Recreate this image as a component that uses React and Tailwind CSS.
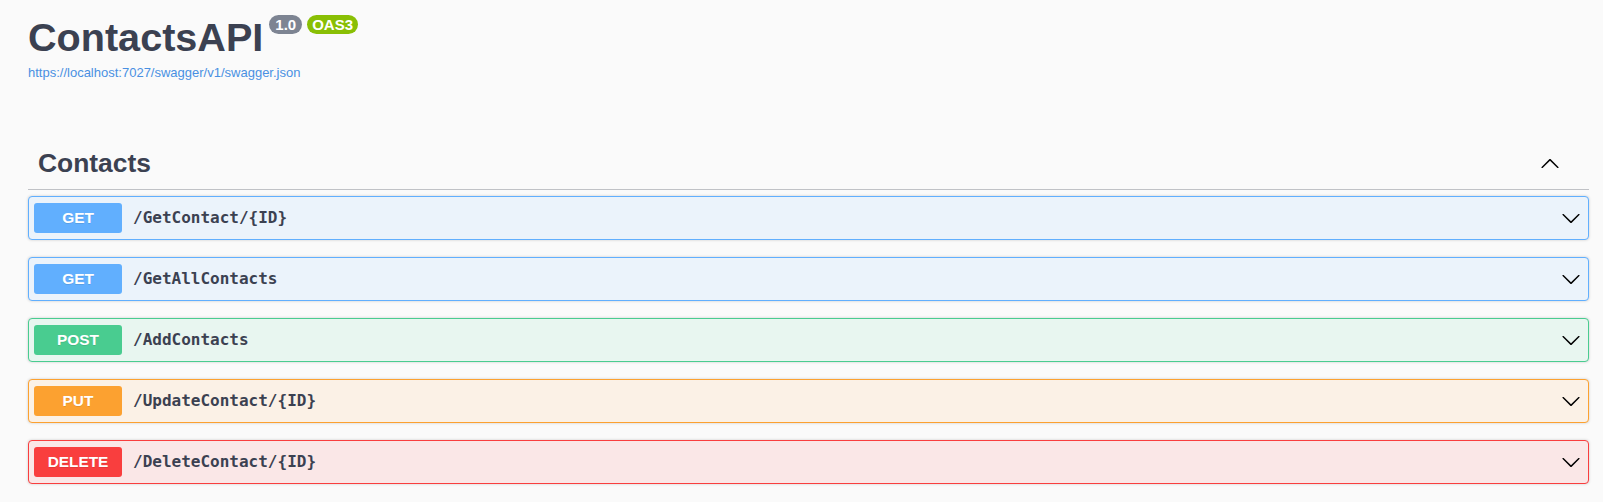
const ops = [
  { method: "GET", path: "/GetContact/{ID}", badge: "bg-[#61affe]", box: "bg-[#ebf3fb] border-[#61affe]" },
  { method: "GET", path: "/GetAllContacts", badge: "bg-[#61affe]", box: "bg-[#ebf3fb] border-[#61affe]" },
  { method: "POST", path: "/AddContacts", badge: "bg-[#49cc90]", box: "bg-[#e8f6f0] border-[#49cc90]" },
  { method: "PUT", path: "/UpdateContact/{ID}", badge: "bg-[#fca130]", box: "bg-[#fbf1e6] border-[#fca130]" },
  { method: "DELETE", path: "/DeleteContact/{ID}", badge: "bg-[#f93e3e]", box: "bg-[#fae7e7] border-[#f93e3e]" },
];

const Arrow = ({ up = false, size = 20 }) => (
  <svg
    width={size}
    height={size}
    viewBox="0 0 20 20"
    className={up ? "rotate-180" : ""}
  >
    <path
      fill="#000"
      d="M17.418 6.109c.272-.268.709-.268.979 0s.271.701 0 .969l-7.908 7.83c-.27.268-.707.268-.979 0l-7.908-7.83c-.27-.268-.27-.701 0-.969.271-.268.709-.268.979 0L10 13.25l7.418-7.141z"
    />
  </svg>
);

const Operation = ({ op }) => (
  <div
    className={`flex items-center h-[44px] mb-[17px] border rounded-[4px] shadow-[0_0_3px_rgba(0,0,0,0.19)] pl-[5px] pr-[6px] ${op.box}`}
  >
    <span
      className={`w-[88px] h-[30px] flex items-center justify-center rounded-[3px] text-white font-bold text-[15.4px] [text-shadow:0_1px_0_rgba(0,0,0,0.1)] ${op.badge}`}
    >
      {op.method}
    </span>
    <span className="ml-[11px] flex-1 font-['DejaVu_Sans_Mono',monospace] font-bold text-[16px] text-[#3b4151]">
      {op.path}
    </span>
    <span className="flex items-center mr-[1px]">
      <Arrow />
    </span>
  </div>
);

export default function App() {
  return (
    <div className="min-h-screen bg-[#fafafa] font-['Liberation_Sans',Arial,sans-serif] text-[#3b4151] pl-[28px] pr-[14px]">
      <div className="pt-[14px]">
        <h2 className="flex items-start text-[39.6px] leading-[46px] font-bold">
          ContactsAPI
          <span className="ml-[6px] mt-[1px] rounded-full bg-[#7d8492] text-white text-[15px] leading-none font-bold px-[6px] py-[2px]">
            1.0
          </span>
          <span className="ml-[5px] mt-[1px] rounded-full bg-[#89bf04] text-white text-[15px] leading-none font-bold px-[5px] py-[2px]">
            OAS3
          </span>
        </h2>
        <a className="block mt-[5px] text-[13px] leading-[16px] text-[#4990e2]" href="#">
          https://localhost:7027/swagger/v1/swagger.json
        </a>
      </div>

      <section className="mt-[57px]">
        <div className="flex items-center justify-between h-[52px] border-b border-[#3b4151]/30 pl-[10px] pr-[29px] mb-[6px]">
          <h3 className="text-[26.4px] font-bold">Contacts</h3>
          <Arrow up size={20} />
        </div>
        {ops.map((op) => (
          <Operation key={op.path} op={op} />
        ))}
      </section>
    </div>
  );
}
